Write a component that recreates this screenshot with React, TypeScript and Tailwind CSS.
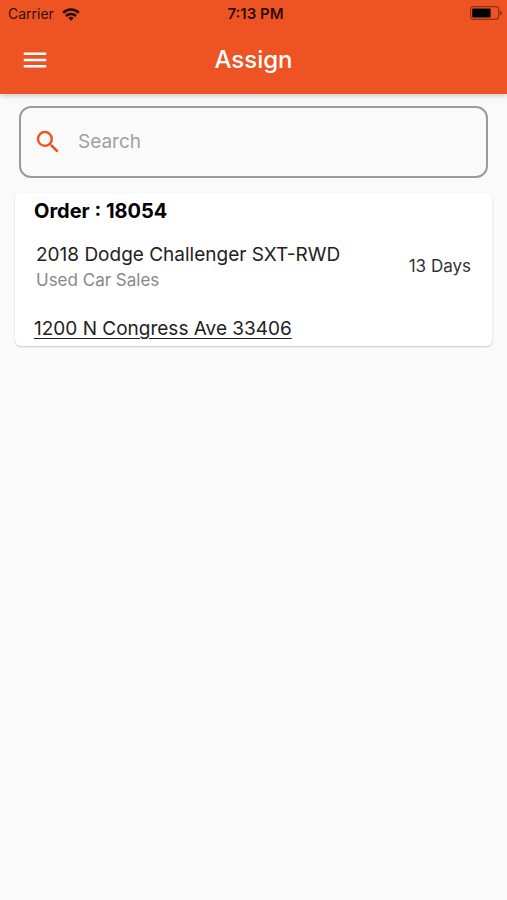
import { useState } from "react";
import { MdMenu, MdSearch } from "react-icons/md";

interface Order {
  id: string;
  vehicle: string;
  department: string;
  address: string;
  days: number;
}

const orders: Order[] = [
  {
    id: "18054",
    vehicle: "2018 Dodge Challenger SXT-RWD",
    department: "Used Car Sales",
    address: "1200 N Congress Ave 33406",
    days: 13,
  },
];

const WifiIcon = () => (
  <svg viewBox="0 0 18 13" className="w-[18px] h-[13px]" fill="none" stroke="currentColor" strokeWidth="2.6" aria-hidden="true">
    <path d="M1.2 4.8A11 11 0 0 1 16.8 4.8" />
    <path d="M4 8A7.1 7.1 0 0 1 14 8" />
    <path d="M9 12.8L6.3 10A3.8 3.8 0 0 1 11.7 10Z" fill="currentColor" stroke="none" />
  </svg>
);

const BatteryIcon = () => (
  <svg viewBox="0 0 33 14" className="w-[33px] h-[14px]" aria-hidden="true">
    <rect x="0.6" y="0.6" width="28" height="12.8" rx="2.6" fill="none" stroke="#000" strokeOpacity="0.4" strokeWidth="1.2" />
    <rect x="2.2" y="2.4" width="18.4" height="9.2" rx="1" fill="#000" />
    <path d="M29.8 4.6C32.8 5.4 32.8 8.6 29.8 9.4Z" fill="#000" fillOpacity="0.4" />
  </svg>
);

const StatusBar = () => (
  <div className="grid grid-cols-3 items-center h-7 pl-2 pr-1 text-sm text-black/85">
    <div className="flex items-center gap-2">
      <span>Carrier</span>
      <WifiIcon />
    </div>
    <span className="text-center text-[15px] font-semibold">7:13 PM</span>
    <div className="flex justify-end pb-0.5">
      <BatteryIcon />
    </div>
  </div>
);

const OrderCard = ({ order }: { order: Order }) => (
  <li className="rounded-md bg-white px-[19px] pt-1 pb-[3px] shadow-[0_1px_2px_rgba(0,0,0,0.2)]">
    <h2 className="text-xl leading-7 font-bold text-black">Order : {order.id}</h2>
    <div className="flex items-center justify-between px-0.5 pt-4">
      <div>
        <p className="text-[19px] leading-7 text-[#222222]">{order.vehicle}</p>
        <p className="text-[17px] leading-[22px] text-[#888888]">{order.department}</p>
      </div>
      <p className="text-[17px] leading-[22px] text-[#333333]">{order.days} Days</p>
    </div>
    <a href="#address" className="block w-fit pt-6 text-[19px] leading-7 text-[#222222] underline underline-offset-3">
      {order.address}
    </a>
  </li>
);

const App = () => {
  const [query, setQuery] = useState("");

  const visible = orders.filter((order) =>
    `${order.id} ${order.vehicle} ${order.address}`.toLowerCase().includes(query.toLowerCase())
  );

  return (
    <div className="min-h-screen bg-[#fafafa] font-['Inter',sans-serif]">
      <header className="bg-[#ee5324] pb-0.5 shadow-[0_1px_6px_rgba(0,0,0,0.25)]">
        <StatusBar />
        <div className="grid grid-cols-[1fr_auto_1fr] items-center h-16 px-5">
          <button type="button" aria-label="Open menu" className="justify-self-start text-white">
            <MdMenu size={30} />
          </button>
          <h1 className="text-2xl font-medium text-white">Assign</h1>
        </div>
      </header>

      <main className="px-[15px] pt-3">
        <label className="flex items-center gap-[15px] h-[72px] mx-1 px-3 rounded-xl border-2 border-[#9b9b9b]">
          <MdSearch size={30} className="shrink-0 text-[#ee5324]" />
          <input
            type="text"
            aria-label="Search"
            placeholder="Search"
            value={query}
            onChange={(e) => setQuery(e.target.value)}
            className="w-full bg-transparent text-[19px] text-[#222222] placeholder:text-[#a0a0a0] outline-none"
          />
        </label>

        <ul className="pt-[15px] space-y-3">
          {visible.map((order) => (
            <OrderCard key={order.id} order={order} />
          ))}
        </ul>
      </main>
    </div>
  );
};

export default App;
